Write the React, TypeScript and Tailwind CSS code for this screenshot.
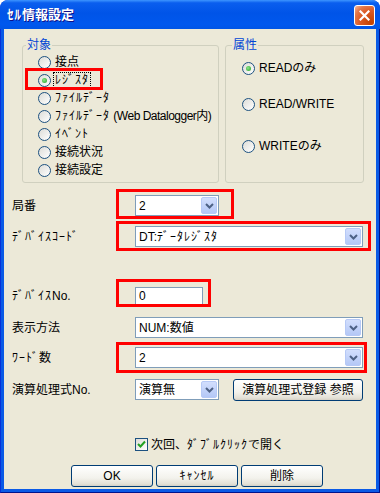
import type { ReactNode } from 'react';

// half-width katakana runs a little wider in the original UI font
function K({ children }: { children: ReactNode }) {
  return <span className="tracking-[1px]">{children}</span>;
}

function Radio({ checked = false }: { checked?: boolean }) {
  return (
    <span className="flex h-[13px] w-[13px] shrink-0 items-center justify-center rounded-full border border-[#1c5180] bg-[linear-gradient(135deg,#dcdcd7,#ffffff)]">
      {checked ? <span className="h-[5px] w-[5px] rounded-full bg-[radial-gradient(circle_at_40%_40%,#8be58b,#21a121)]" /> : null}
    </span>
  );
}

function RadioRow({ label, checked, focused, children }: { label: ReactNode; checked?: boolean; focused?: boolean; children?: ReactNode }) {
  return (
    <div className="relative flex h-[18px] items-center gap-[2px]">
      <Radio checked={checked} />
      <span
        className={
          focused
            ? 'border border-dotted border-black px-px leading-[14px] whitespace-nowrap'
            : 'border border-transparent px-px leading-[14px] whitespace-nowrap'
        }
      >
        {label}
      </span>
      {children}
    </div>
  );
}

function RedBox({ className }: { className: string }) {
  // annotation frame drawn over the dialog
  return <span className={`pointer-events-none absolute border-[3px] border-[#ff0000] ${className}`} />;
}

function DropButton() {
  return (
    <span className="flex h-[17px] w-[16px] shrink-0 items-center justify-center rounded-[2px] border border-[#b6c9f6] bg-[linear-gradient(180deg,#d2defd,#b4c8f6)]">
      <svg width="9" height="6" viewBox="0 0 9 6">
        <path d="M1 1 L4.5 4.5 L8 1" fill="none" stroke="#4d6185" strokeWidth="2" />
      </svg>
    </span>
  );
}

function ComboBox({ value, className }: { value: ReactNode; className: string }) {
  return (
    <div className={`flex h-[21px] items-center border border-[#7f9db9] bg-white pl-[3px] pr-px ${className}`}>
      <span className="flex-1 leading-none whitespace-nowrap">{value}</span>
      <DropButton />
    </div>
  );
}

function XpButton({ children, className }: { children: ReactNode; className: string }) {
  return (
    <button
      type="button"
      className={`flex h-[22px] items-center justify-center rounded-[3px] border border-[#003c74] bg-[linear-gradient(180deg,#ffffff,#f3f2ec_60%,#e3e0d6_90%,#d6d0c5)] leading-none text-black ${className}`}
    >
      {children}
    </button>
  );
}

function Field({ label, children, className = 'mt-[10px]' }: { label: ReactNode; children: ReactNode; className?: string }) {
  return (
    <div className={`flex h-[21px] items-center pl-[8px] ${className}`}>
      <span className="w-[123px] shrink-0 whitespace-nowrap">{label}</span>
      {children}
    </div>
  );
}

export default function App() {
  return (
    <div className='h-[493px] w-[380px] overflow-hidden bg-white font-["Liberation_Sans","Noto_Sans_CJK_JP",sans-serif] text-[12px] text-black'>
      <div className="flex h-full flex-col rounded-t-[8px] bg-[#0831d9]">
        {/* title bar */}
        <div className="flex h-[29px] shrink-0 items-center justify-between rounded-t-[8px] bg-[linear-gradient(180deg,#3d95ff,#0a5eee_10%,#0054e8_45%,#0058ee_85%,#0055e5_100%)] pl-[7px] pr-[5px] pt-px">
          <span className="text-[13px] font-bold text-white [text-shadow:1px_1px_#0f1089]">
            <K>ｾﾙ</K>情報設定
          </span>
          <span className="flex h-[21px] w-[21px] items-center justify-center rounded-[3px] border border-white bg-[radial-gradient(circle_at_85%_85%,#c24200_0%,#dc5a25_50%,#e2784a_75%,#f5b89c_100%)]">
            <svg width="11" height="11" viewBox="0 0 11 11">
              <path d="M1.5 1.5 L9.5 9.5 M9.5 1.5 L1.5 9.5" stroke="white" strokeWidth="2.2" strokeLinecap="square" />
            </svg>
          </span>
        </div>

        {/* frame */}
        <div className="flex min-h-0 flex-1 border-x border-b border-l-[#0831d9] border-r-[#00138c] border-b-[#00138c] bg-[#0a5ae6] px-[3px] pb-[3px]">
          <div className="flex flex-1 flex-col bg-[#ece9d8]">
            <div className="mt-[16px] flex gap-[6px] pl-[18px]">
              <div className="relative h-[138px] w-[197px] rounded-[3px] border border-[#d0d0bf] pl-[15px] pt-[7px]">
                <span className="absolute -top-[8px] left-[3px] bg-[#ece9d8] px-px leading-[14px] text-[#0046d5]">対象</span>
                <RadioRow label="接点" />
                <RadioRow label={<K>ﾚｼﾞｽﾀ</K>} checked focused>
                  <RedBox className="-left-[13px] -top-[3px] h-[22px] w-[78px]" />
                </RadioRow>
                <RadioRow label={<K>ﾌｧｲﾙﾃﾞｰﾀ</K>} />
                <RadioRow
                  label={
                    <>
                      <K>ﾌｧｲﾙﾃﾞｰﾀ</K> <span className="tracking-[-0.5px]">(Web Datalogger内)</span>
                    </>
                  }
                />
                <RadioRow label={<K>ｲﾍﾞﾝﾄ</K>} />
                <RadioRow label="接続状況" />
                <RadioRow label="接続設定" />
              </div>
              <div className="relative flex h-[138px] w-[139px] flex-col rounded-[3px] border border-[#d0d0bf] pl-[16px] pt-[13px]">
                <span className="absolute -top-[8px] left-[6px] bg-[#ece9d8] px-px leading-[14px] text-[#0046d5]">属性</span>
                <RadioRow label="READのみ" checked />
                <div className="mt-[18px]">
                  <RadioRow label="READ/WRITE" />
                </div>
                <div className="mt-[24px]">
                  <RadioRow label="WRITEのみ" />
                </div>
              </div>
            </div>

            <Field label="局番" className="mt-[12px]">
              <div className="relative">
                <ComboBox value="2" className="w-[84px]" />
                <RedBox className="-left-[19px] -top-[6px] h-[30px] w-[118px]" />
              </div>
            </Field>

            <Field label={<K>ﾃﾞﾊﾞｲｽｺｰﾄﾞ</K>}>
              <div className="relative">
                <ComboBox
                  value={
                    <>
                      DT:<K>ﾃﾞｰﾀﾚｼﾞｽﾀ</K>
                    </>
                  }
                  className="w-[228px]"
                />
                <RedBox className="-left-[19px] -top-[5px] h-[30px] w-[255px]" />
              </div>
            </Field>

            <Field
              label={
                <>
                  <K>ﾃﾞﾊﾞｲｽ</K>No.
                </>
              }
              className="mt-[38px]"
            >
              <div className="relative">
                <div className="flex h-[18px] w-[68px] items-center border border-[#7f9db9] bg-white pl-[3px] leading-none">0</div>
                <RedBox className="-left-[19px] -top-[8px] h-[28px] w-[95px]" />
              </div>
            </Field>

            <Field label="表示方法" className="mt-[11px]">
              <ComboBox value="NUM:数値" className="w-[228px]" />
            </Field>

            <Field
              label={
                <>
                  <K>ﾜｰﾄﾞ</K>数
                </>
              }
              className="mt-[9px]"
            >
              <div className="relative">
                <ComboBox value="2" className="w-[228px]" />
                <RedBox className="-left-[19px] -top-[5px] h-[31px] w-[251px]" />
              </div>
            </Field>

            <Field label="演算処理式No." className="mt-[11px]">
              <ComboBox value="演算無" className="w-[84px]" />
              <XpButton className="ml-[14px] w-[130px]">演算処理式登録 参照</XpButton>
            </Field>

            <div className="mt-[38px] flex items-center gap-[3px] pl-[131px]">
              <span className="flex h-[13px] w-[13px] items-center justify-center border border-[#1c5180] bg-[linear-gradient(135deg,#dcdcd7,#ffffff)]">
                <svg width="9" height="9" viewBox="0 0 9 9">
                  <path d="M1 4 L3.5 6.5 L8 1.5" fill="none" stroke="#21a121" strokeWidth="2" />
                </svg>
              </span>
              <span className="leading-none whitespace-nowrap">
                次回、<K>ﾀﾞﾌﾞﾙｸﾘｯｸ</K>で開く
              </span>
            </div>

            <div className="mt-[14px] flex gap-[3px] pl-[67px]">
              <XpButton className="w-[82px]">OK</XpButton>
              <XpButton className="w-[82px]">
                <K>ｷｬﾝｾﾙ</K>
              </XpButton>
              <XpButton className="w-[82px]">削除</XpButton>
            </div>
          </div>
        </div>
      </div>
    </div>
  );
}
